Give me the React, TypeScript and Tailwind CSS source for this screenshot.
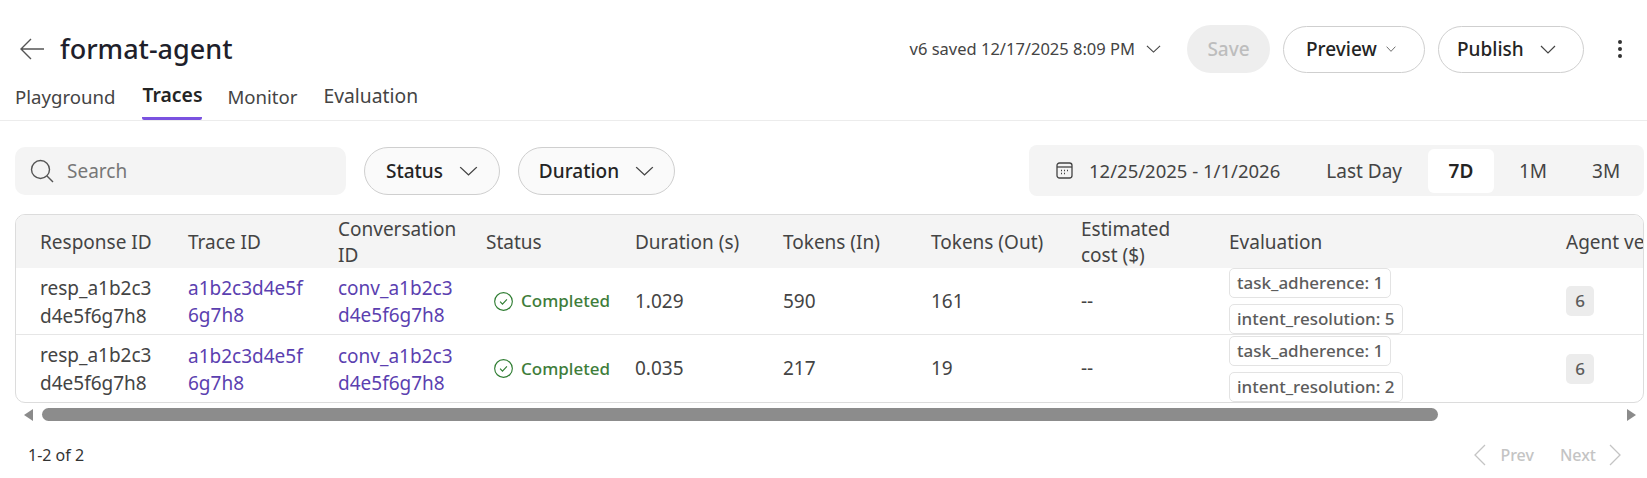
import React from "react";

const Chevron = ({ w = 16, h = 9, c = "#444" }: { w?: number; h?: number; c?: string }) => (
  <svg width={w} height={h} viewBox="0 0 16 9" fill="none" stroke={c} strokeWidth="1.2" preserveAspectRatio="none">
    <path d="M1 1l7 7 7-7" />
  </svg>
);

const CheckCircle = () => (
  <svg width="21" height="21" viewBox="0 0 20 20" fill="none" stroke="#2f7d32" strokeWidth="1.2">
    <circle cx="10" cy="10" r="9.3" />
    <path d="M6.4 10.2l2.5 2.5 4.7-5" />
  </svg>
);

const COLS = "grid grid-cols-[148px_149px_148px_149px_149px_148px_150px_148px_337px_200px] w-max";

const Tag = ({ children }: { children: React.ReactNode }) => (
  <span className="h-[30px] px-[7px] flex items-center w-fit rounded-[5px] border border-[#e3e3e3] bg-white text-[17px] font-medium text-[#5c5c5c] whitespace-nowrap">
    {children}
  </span>
);

const Row = ({ dur, inn, out, a, b, last }: { dur: string; inn: string; out: string; a: string; b: string; last?: boolean }) => (
  <div className={`${COLS} h-[67px] items-center text-[19px] text-[#444444] ${last ? "" : "border-b border-[#e6e6e6]"}`}>
    <div className="pl-[24px] pt-[1px] leading-[28px] whitespace-pre-line">{"resp_a1b2c3\nd4e5f6g7h8"}</div>
    <div className="pl-[24px] pt-[2px] leading-[27px] text-[#5b3fb0] whitespace-pre-line">{"a1b2c3d4e5f\n6g7h8"}</div>
    <div className="pl-[25px] pt-[2px] leading-[27px] text-[#5b3fb0] whitespace-pre-line">{"conv_a1b2c3\nd4e5f6g7h8"}</div>
    <div className="pl-[33px] flex items-center gap-[8px] text-[17px] font-medium text-[#3e7d3a]">
      <CheckCircle />
      <span>Completed</span>
    </div>
    <div className="pl-[25px]">{dur}</div>
    <div className="pl-[24px]">{inn}</div>
    <div className="pl-[24px]">{out}</div>
    <div className="pl-[24px]">--</div>
    <div className="pl-[24px] flex flex-col gap-[6px]">
      <Tag>task_adherence: 1</Tag>
      <Tag>intent_resolution: {b}</Tag>
    </div>
    <div className="pl-[24px]">
      <span className="w-[28px] h-[30px] rounded-[5px] bg-[#ececec] flex items-center justify-center text-[17px] font-medium text-[#5c5c5c]">{a}</span>
    </div>
  </div>
);

export default function App() {
  return (
    <div className="w-[1647px] h-[478px] overflow-hidden bg-white text-[#242424] font-['Noto_Sans','Liberation_Sans',sans-serif]">
      <div className="h-[120px] border-b border-[#ececec] box-content">
        <div className="h-[73px] flex items-end justify-between">
          <div className="flex items-center h-[48px] pl-[19px] gap-[15px]">
            <svg width="26" height="24" viewBox="0 0 26 24" fill="none" stroke="#555" strokeWidth="1.4">
              <path d="M25 12H2M12 2L2 12l10 10" />
            </svg>
            <h1 className="text-[27px] font-medium text-[#1f1f2b]">format-agent</h1>
          </div>
          <div className="flex items-center h-[48px]">
            <span className="text-[16.5px] text-[#444]">v6 saved 12/17/2025 8:09 PM</span>
            <span className="ml-[11px] mr-[26px]"><Chevron w={15} h={8} /></span>
            <span className="w-[83px] h-[48px] rounded-full bg-[#eeeeee] flex items-center justify-center text-[19px] font-medium text-[#bdbdbd]">Save</span>
            <span className="ml-[13px] w-[142px] h-[47px] pl-[22px] rounded-full border border-[#cfcfcf] flex items-center gap-[9px] text-[19px] font-medium">
              <span className="pt-[1px]">Preview</span> <Chevron w={10} h={6} />
            </span>
            <span className="ml-[13px] w-[146px] h-[47px] pl-[18px] rounded-full border border-[#cfcfcf] flex items-center gap-[16px] text-[19px] font-medium">
              <span className="pt-[1px]">Publish</span> <Chevron w={16} h={9} />
            </span>
            <span className="ml-[34px] mr-[25px] flex flex-col gap-[3px]">
              <i className="block w-[4px] h-[4px] rounded-full bg-[#333]" />
              <i className="block w-[4px] h-[4px] rounded-full bg-[#333]" />
              <i className="block w-[4px] h-[4px] rounded-full bg-[#333]" />
            </span>
          </div>
        </div>
        <div className="h-[47px] flex items-stretch pl-[15px] text-[19px] text-[#444]">
          <span className="flex items-center text-[18.6px]">Playground</span>
          <span className="ml-[27px] flex items-center text-[19.4px] font-semibold text-[#242424] border-b-[3px] border-[#7a52e0] rounded-b-[2px] h-[47px]">Traces</span>
          <span className="ml-[25px] flex items-center text-[18.6px]">Monitor</span>
          <span className="ml-[26px] flex items-center text-[19.3px]">Evaluation</span>
        </div>
      </div>

      <div className="mt-[24px] h-[51px] flex items-center pl-[15px] pr-[3px]">
        <div className="w-[331px] h-[48px] rounded-[10px] bg-[#f4f4f4] flex items-center pl-[15px] gap-[13px] text-[19px] text-[#777]">
          <svg width="24" height="24" viewBox="0 0 24 24" fill="none" stroke="#555" strokeWidth="1.4">
            <circle cx="10.5" cy="10.5" r="9" />
            <path d="M17 17l6 6" />
          </svg>
          <span className="pt-[2px]">Search</span>
        </div>
        <span className="ml-[18px] w-[136px] h-[48px] rounded-full bg-[#fafafa] border border-[#cfcfcf] flex items-center justify-center gap-[16px] text-[19px] font-medium">
          <span className="pt-[2px]">Status</span> <Chevron w={19} h={10} />
        </span>
        <span className="ml-[18px] w-[157px] h-[48px] rounded-full bg-[#fafafa] border border-[#cfcfcf] flex items-center justify-center gap-[16px] text-[19px] font-medium">
          <span className="pt-[2px]">Duration</span> <Chevron w={19} h={10} />
        </span>
        <div className="ml-auto w-[615px] h-[51px] rounded-[8px] bg-[#f4f4f4] flex items-center text-[19px] text-[#444]">
          <svg className="ml-[27px]" width="17" height="17" viewBox="0 0 17 17" fill="none" stroke="#444" strokeWidth="1.3">
            <rect x="1" y="1" width="15" height="15" rx="2.5" />
            <path d="M1 5h15" />
            <path d="M5 8.5h1M8 8.5h1M11 8.5h1M5 11.5h1M8 11.5h1" strokeWidth="1.5" />
          </svg>
          <span className="ml-[16px] pt-[1px] text-[18.5px] whitespace-nowrap">12/25/2025 - 1/1/2026</span>
          <span className="ml-[46px] pt-[2px] whitespace-nowrap">Last Day</span>
          <span className="ml-[26px] pt-[2px] w-[66px] h-[44px] rounded-[6px] bg-white flex items-center justify-center font-semibold text-[#242424]">7D</span>
          <span className="ml-[25px] pt-[2px]">1M</span>
          <span className="ml-[45px] pt-[2px]">3M</span>
        </div>
      </div>

      <div className="mt-[18px] ml-[15px] mr-[3px] h-[189px] border border-[#dcdcdc] rounded-[10px] overflow-hidden">
        <div className={`${COLS} h-[53px] items-center bg-[#f4f4f4] text-[19px] text-[#444] leading-[26px]`}>
          <div className="pl-[24px]">Response ID</div>
          <div className="pl-[24px]">Trace ID</div>
          <div className="pl-[25px]">Conversation<br />ID</div>
          <div className="pl-[25px]">Status</div>
          <div className="pl-[25px]">Duration (s)</div>
          <div className="pl-[24px]">Tokens (In)</div>
          <div className="pl-[24px]">Tokens (Out)</div>
          <div className="pl-[24px]">Estimated<br />cost ($)</div>
          <div className="pl-[24px]">Evaluation</div>
          <div className="pl-[24px] whitespace-nowrap">Agent version</div>
        </div>
        <Row dur="1.029" inn="590" out="161" a="6" b="5" />
        <Row dur="0.035" inn="217" out="19" a="6" b="2" last />
      </div>

      <div className="mt-[5px] ml-[24px] mr-[11px] h-[13px] flex items-center">
        <span className="w-0 h-0 border-y-[6px] border-y-transparent border-r-[9px] border-r-[#8b8b8b]" />
        <div className="ml-[9px] w-[1396px] h-[13px] rounded-full bg-[#8c8c8c]" />
        <span className="ml-auto w-0 h-0 border-y-[6px] border-y-transparent border-l-[9px] border-l-[#8b8b8b]" />
      </div>

      <div className="mt-[22px] pl-[28px] pr-[25px] h-[24px] flex items-center text-[16px] text-[#333]">
        <span>1-2 of 2</span>
        <div className="ml-auto flex items-center text-[#c4c4c4] font-medium">
          <svg width="13" height="22" viewBox="0 0 13 22" fill="none" stroke="#c4c4c4" strokeWidth="1.3"><path d="M12 1L2 11l10 10" /></svg>
          <span className="ml-[14px]">Prev</span>
          <span className="ml-[26px]">Next</span>
          <svg className="ml-[13px]" width="13" height="22" viewBox="0 0 13 22" fill="none" stroke="#c4c4c4" strokeWidth="1.3"><path d="M1 1l10 10L1 21" /></svg>
        </div>
      </div>
    </div>
  );
}
